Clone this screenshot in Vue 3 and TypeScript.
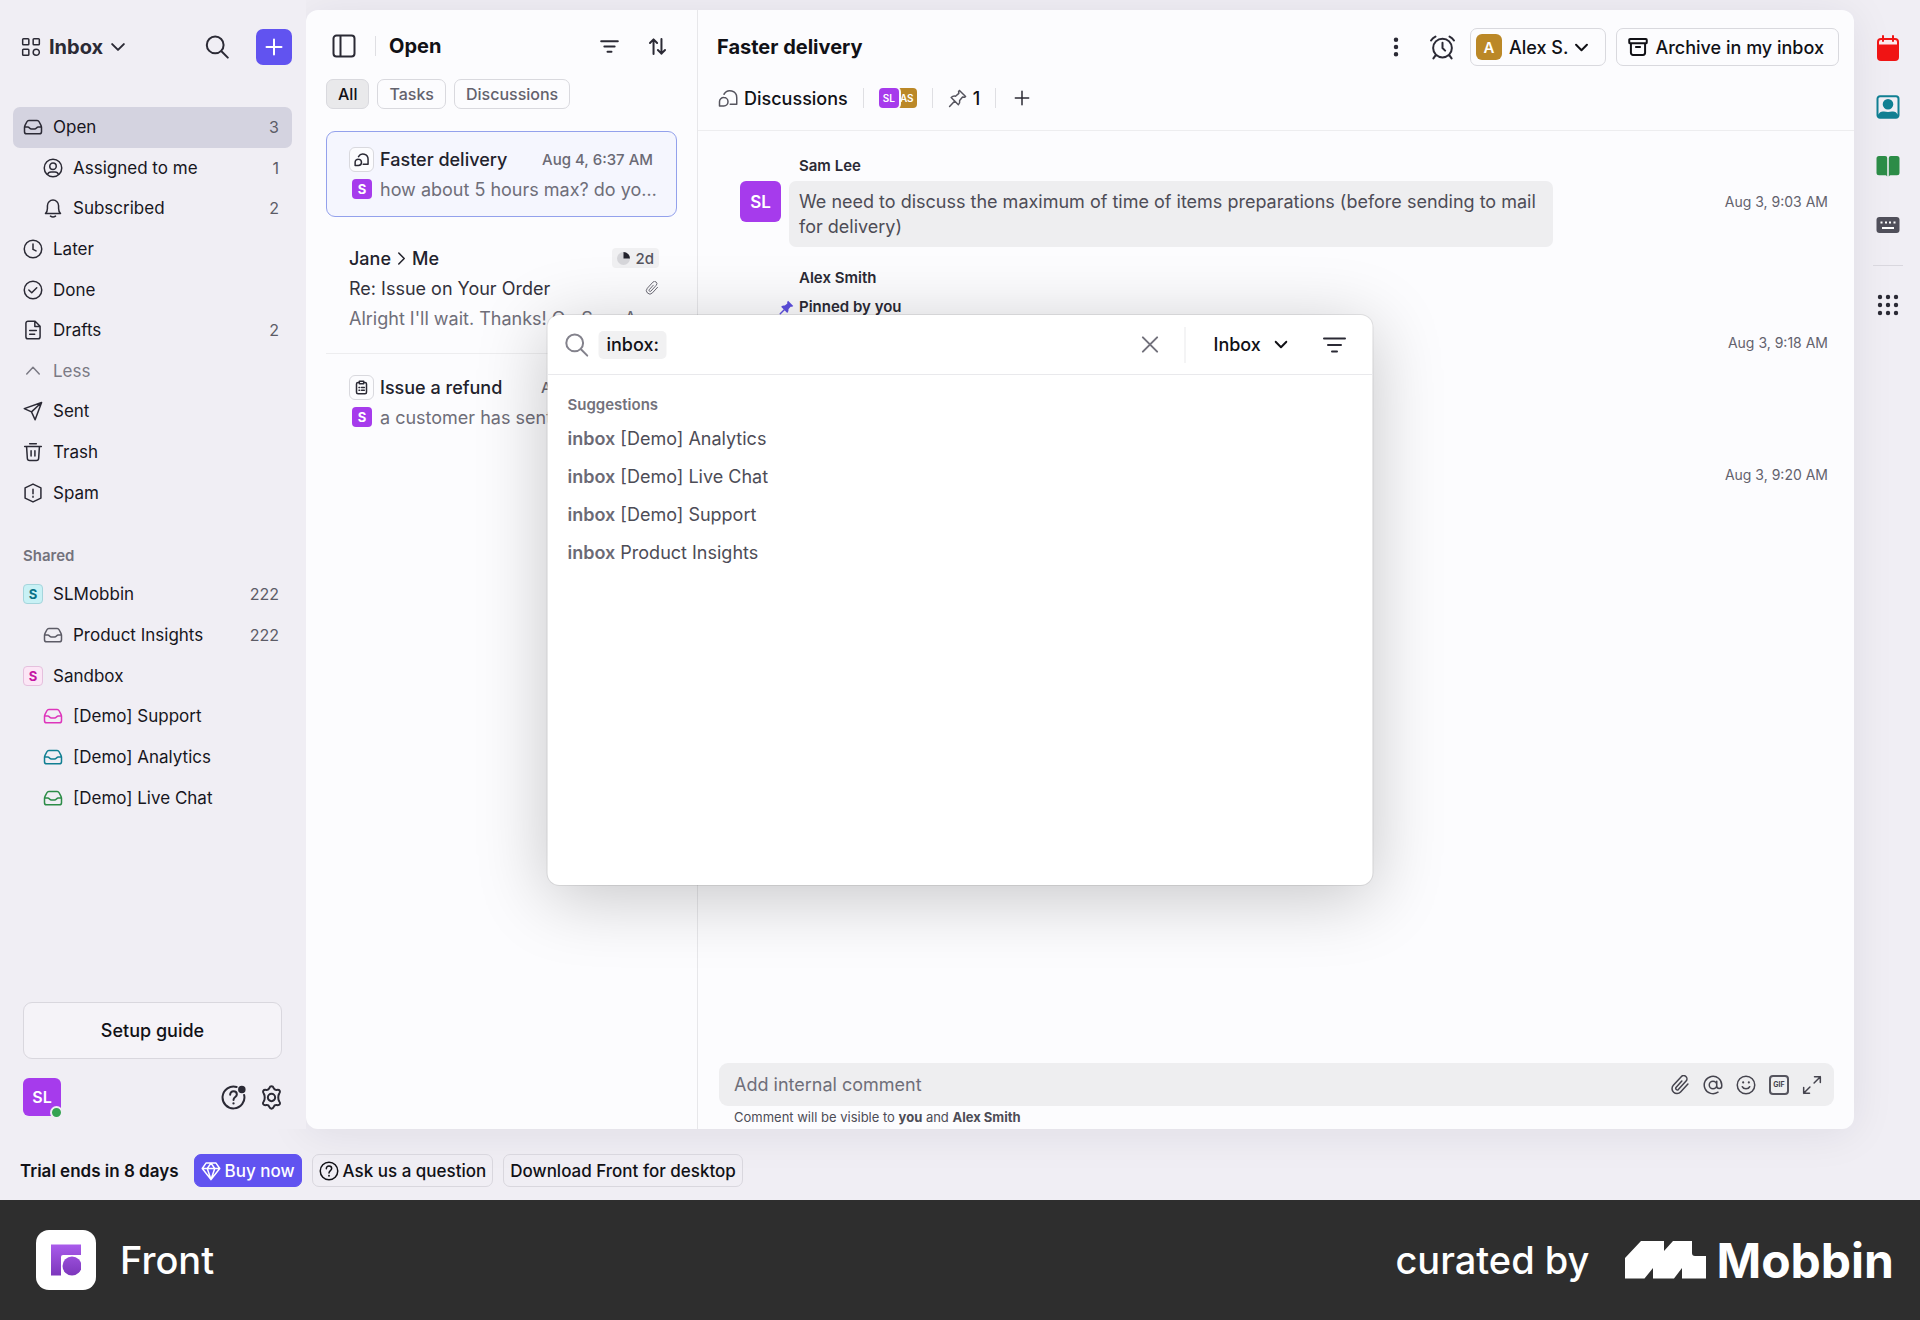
<script setup lang="ts">
import { h, ref } from 'vue'

interface Shape {
  stroke?: string[]
  fill?: string[]
}

const tray =
  'M1.8 12.6v5a2.6 2.6 0 0 0 2.6 2.6h15.2a2.6 2.6 0 0 0 2.6-2.6v-5c0-1.2-.3-2-.9-3.1l-2-3.8a2.6 2.6 0 0 0-2.3-1.4H7a2.6 2.6 0 0 0-2.3 1.4l-2 3.8c-.6 1.1-.9 1.9-.9 3.1zM2 12h3.6c1.1 0 1.6.4 2.2 1.1.7.8 1.2 1.2 2.4 1.2h3.6c1.2 0 1.7-.4 2.4-1.2.6-.7 1.1-1.1 2.2-1.1H22'

const shapes: Record<string, Shape> = {
  apps: { stroke: ['M3 2h5.4a1 1 0 0 1 1 1v5.4a1 1 0 0 1-1 1H3a1 1 0 0 1-1-1V3a1 1 0 0 1 1-1zM15.6 2H21a1 1 0 0 1 1 1v5.4a1 1 0 0 1-1 1h-5.4a1 1 0 0 1-1-1V3a1 1 0 0 1 1-1zM3 14.6h5.4a1 1 0 0 1 1 1V21a1 1 0 0 1-1 1H3a1 1 0 0 1-1-1v-5.4a1 1 0 0 1 1-1zM18.3 14.6a3.7 3.7 0 1 1 0 7.4 3.7 3.7 0 0 1 0-7.4z'] },
  down: { stroke: ['M2 7l10 10L22 7'] },
  up: { stroke: ['M4.500 15.500l7.500-8 7.500 8'] },
  right: { stroke: ['M7 2l10 10L7 22'] },
  search: { stroke: ['M10.200 1.500a8.400 8.400 0 1 1 0 16.800 8.400 8.400 0 0 1 0-16.800zM16.200 16l6.600 6.600'] },
  plus: { stroke: ['M12 2v20M2 12h20'] },
  close: { stroke: ['M3 3l18 18M21 3L3 21'] },
  tray: { stroke: [tray] },
  person: { stroke: ['M12 1.500a10.500 10.500 0 1 1 0 21 10.500 10.500 0 0 1 0-21zM12 6a3.900 3.900 0 1 1 0 7.800A3.900 3.900 0 0 1 12 6zM5.500 19.800c.6-2 2-3 4-3h5c2 0 3.400 1 4 3'] },
  bell: { stroke: ['M3 18.500h18c-1.700-1.800-2.300-3.500-2.300-6V9.200a6.700 6.700 0 0 0-13.400 0v3.300c0 2.500-.6 4.200-2.300 6zM9 21.800c1.600 1.200 4.400 1.200 6 0'] },
  clock: { stroke: ['M12 1.500a10.500 10.500 0 1 1 0 21 10.500 10.500 0 0 1 0-21zM12 6v6.500l3.600 1.800'] },
  check: { stroke: ['M12 1.500a10.500 10.500 0 1 1 0 21 10.500 10.500 0 0 1 0-21zM7 12l3.500 3.300 6-6'] },
  doc: { stroke: ['M6 1.500h8.500L20.500 7.500V20a2.500 2.500 0 0 1-2.500 2.500H6A2.500 2.500 0 0 1 3.500 20V4A2.500 2.500 0 0 1 6 1.500zM14.200 1.800v5.900h6M8 12.500h8M8 17h6'] },
  send: { stroke: ['M22.300 1.800L14.500 22.500 10.200 13 1.500 9.200zM22.300 1.800L10.200 13'] },
  trash: { stroke: ['M2 5.300h20M8 2h8M4.300 5.500l.9 14a2.800 2.800 0 0 0 2.800 2.700h8a2.800 2.800 0 0 0 2.800-2.700l.9-14M9.700 10.500v6.200M14.300 10.500v6.200'] },
  spam: { stroke: ['M12 1.300l9.500 4.600v12.200L12 22.700l-9.500-4.600V5.900zM12 7.500v5.300M12 16v1'] },
  helpDot: { stroke: ['M15 1.900A10.500 10.500 0 1 0 22.200 9.500M8.800 9.300c0-1.900 1.300-3.200 3.200-3.200s3.200 1.200 3.200 3c0 2.500-3.200 2.500-3.200 5.300'], fill: ['M12 16.600a1.100 1.100 0 1 1 0 2.200 1.100 1.100 0 0 1 0-2.200zM20 .6a3.600 3.600 0 1 1 0 7.200 3.600 3.600 0 0 1 0-7.200z'] },
  help: { stroke: ['M12 1.500a10.500 10.500 0 1 1 0 21 10.500 10.500 0 0 1 0-21zM8.800 9.300c0-1.900 1.300-3.200 3.200-3.200s3.200 1.200 3.200 3c0 2.500-3.200 2.500-3.200 5.300'], fill: ['M12 16.600a1.100 1.100 0 1 1 0 2.200 1.100 1.100 0 0 1 0-2.200z'] },
  gear: { stroke: ['M10.300 2.300a1.900 1.900 0 0 1 3.400 0c.6 1.500 1.700 2.200 3.300 2.100l1.300-.1a1.900 1.900 0 0 1 1.700 2.900l-.9 1.400c-.9 1.200-.9 2.500 0 3.700l1.300 1.800a1.900 1.900 0 0 1-1.700 2.900l-1.700.1c-1.600-.1-2.700.6-3.300 2.100a1.900 1.900 0 0 1-3.400 2.500c-.6-1.500-1.700-2.300-3.300-2.200l-1.700.2A1.900 1.900 0 0 1 3.600 16.800l1.100-1.500c.9-1.200.9-2.500 0-3.700L3.500 9.800'] },
  cog: { stroke: ['M12 1.300c1.300 0 1.700.7 2.100 1.700.5 1.400 1.400 1.900 2.900 1.700 1.100-.2 2.200-.3 2.900.8.700 1.200.200 2-.5 2.900-.9 1.100-.9 1.900-.9 3.600 0 1.700 0 2.500.9 3.600.7.9 1.200 1.700.5 2.900-.7 1.100-1.800 1-2.900.8-1.500-.2-2.400.3-2.900 1.700-.4 1-.8 1.700-2.100 1.700s-1.700-.7-2.100-1.700c-.5-1.400-1.400-1.900-2.900-1.700-1.100.2-2.200.3-2.900-.8-.7-1.200-.2-2 .5-2.900.9-1.100.9-1.900.9-3.600 0-1.700 0-2.500-.9-3.600-.7-.9-1.200-1.700-.5-2.900.7-1.100 1.800-1 2.900-.8 1.500.2 2.400-.3 2.900-1.700.4-1 .8-1.700 2.100-1.700zM12 8.500a3.500 3.500 0 1 1 0 7 3.500 3.500 0 0 1 0-7z'] },
  gem: { stroke: ['M6 2.500h12l4.500 6.500L12 22.300 1.500 9zM1.500 9h21M12 2.500L7.500 9 12 22.300 16.500 9z'] },
  sidebar: { stroke: ['M4.500 1.500h15a3 3 0 0 1 3 3v15a3 3 0 0 1-3 3h-15a3 3 0 0 1-3-3v-15a3 3 0 0 1 3-3zM8.500 1.500v21'] },
  filter: { stroke: ['M1.500 5.500h21M5.500 12h13M9.500 18.500h5'] },
  sort: { stroke: ['M7 21.500V3M2.500 7.500L7 3l4.500 4.500M17 2.500V21M12.500 16.500L17 21l4.500-4.500'] },
  chat: { stroke: ['M7.200 7.500a8.200 8.200 0 0 1 15.300 4.200V19.500h-7.800M7 11.500a5 5 0 1 1 0 10H1.800v-5a5 5 0 0 1 5.200-5z'] },
  clipboard: { stroke: ['M8 4H6.500A2.500 2.500 0 0 0 4 6.500v13A2.500 2.500 0 0 0 6.500 22h11a2.500 2.500 0 0 0 2.500-2.500v-13A2.500 2.500 0 0 0 17.500 4H16M8.500 2h7v4h-7zM8 12h1M12 12h4.500M8 16.500h1M12 16.500h4.500'] },
  clip: { stroke: ['M14.200 7.200l-7 7.800a1.900 1.900 0 0 0 2.800 2.500l9.300-10.200a3.900 3.900 0 0 0-5.800-5.300L4 12.400a5.900 5.900 0 0 0 8.700 8L21.500 10.800'] },
  at: { stroke: ['M12 7.500a4.500 4.500 0 1 1 0 9 4.500 4.500 0 0 1 0-9zM16.500 7.500v5.700a3 3 0 0 0 6 0V12a10.500 10.500 0 1 0-4.500 8.600'] },
  smile: { stroke: ['M12 1.500a10.500 10.500 0 1 1 0 21 10.500 10.500 0 0 1 0-21zM7.500 14c1.500 3.500 7.500 3.500 9 0'], fill: ['M8.600 7.600a1.300 1.300 0 1 1 0 2.600 1.300 1.300 0 0 1 0-2.600zM15.400 7.600a1.300 1.300 0 1 1 0 2.600 1.300 1.300 0 0 1 0-2.600z'] },
  expand: { stroke: ['M14.500 9.500L22 2M15 2h7v7M9.500 14.500L2 22M2 15v7h7'] },
  dots: { fill: ['M12 .5a2.700 2.700 0 1 1 0 5.400 2.700 2.700 0 0 1 0-5.400zM12 9.300a2.700 2.700 0 1 1 0 5.400 2.700 2.700 0 0 1 0-5.400zM12 18.100a2.700 2.700 0 1 1 0 5.400 2.700 2.700 0 0 1 0-5.400z'] },
  alarm: { stroke: ['M12 3.500a9 9 0 1 1 0 18 9 9 0 0 1 0-18zM12 7.500v5l2.500 2.500M1 5.300A11 11 0 0 1 5.200 1.500M23 5.300a11 11 0 0 0-4.200-3.800M5.500 19.300l-2.200 3.200M18.500 19.300l2.200 3.200'] },
  archive: { stroke: ['M2.500 2.500h19a1 1 0 0 1 1 1v3a1 1 0 0 1-1 1h-19a1 1 0 0 1-1-1v-3a1 1 0 0 1 1-1zM3.500 7.500V19A2.500 2.500 0 0 0 6 21.500h12a2.500 2.500 0 0 0 2.500-2.500V7.500M9.500 12h5'] },
  pin: { stroke: ['M14.500 1.800l7.700 7.700-1.600 1-2.200-.3-3.700 4.200c.4 2.100 0 3.900-1.600 5.400L4 10.700c1.500-1.500 3.400-2 5.500-1.600l4.200-3.600-.3-2.300zM8.300 15.500L2 22'] },
  pinned: { stroke: ['M8 16l-6 6'], fill: ['M14.500 1.200l8.300 8.300-1.800 1.400-2.400-.2-3.500 4c.4 2.200-.2 4.200-1.900 5.900L3.400 10.800c1.700-1.700 3.700-2.300 5.900-1.900l4-3.500-.2-2.400z'] },
  book: { fill: ['M3 2h6.200a2 2 0 0 1 2 2v18.500c-.6-1-1.200-1.300-2.200-1.300H3a2.500 2.500 0 0 1-2.500-2.500V4.500A2.500 2.500 0 0 1 3 2zM21 2h-6.200a2 2 0 0 0-2 2v18.500c.6-1 1.200-1.300 2.200-1.300h6a2.500 2.500 0 0 0 2.500-2.500V4.500A2.500 2.500 0 0 0 21 2z'] },
  contact: { stroke: ['M4 1.300h16a2.500 2.500 0 0 1 2.500 2.500v16.400a2.500 2.500 0 0 1-2.500 2.500H4a2.500 2.500 0 0 1-2.500-2.500V3.800A2.500 2.500 0 0 1 4 1.300z'], fill: ['M12 4a5.300 5.300 0 1 1 0 10.600A5.300 5.300 0 0 1 12 4zM2 22.500v-2.800c1.500-2.500 3.500-3.700 6-3.200 2.600.6 5.400.6 8 0 2.500-.5 4.500.7 6 3.200v2.800z'] },
  grid: { fill: [4, 12, 20].flatMap((y) => [4, 12, 20].map((x) => `M${x - 2.2} ${y}a2.200 2.200 0 1 0 4.400 0a2.200 2.200 0 1 0-4.400 0z`)) },
}

interface IconProps {
  name: string
  size: number
  weight?: number
}

const Icon = (props: IconProps) => {
  const shape = shapes[props.name]
  return h('svg', { width: props.size, height: props.size, viewBox: '0 0 24 24', 'aria-hidden': 'true', style: { display: 'block', flex: 'none' } }, [
    ...(shape.stroke ?? []).map((d) =>
      h('path', { d, fill: 'none', stroke: 'currentColor', 'stroke-width': ((props.weight ?? 1.5) * 24) / props.size, 'stroke-linecap': 'round', 'stroke-linejoin': 'round' }),
    ),
    ...(shape.fill ?? []).map((d) => h('path', { d, fill: 'currentColor' })),
  ])
}
Icon.props = ['name', 'size', 'weight']

interface NavItem {
  label: string
  icon?: string
  tone?: string
  badge?: boolean
  count?: number
  nested?: boolean
}

const folders: NavItem[] = [
  { label: 'Open', icon: 'tray', count: 3 },
  { label: 'Assigned to me', icon: 'person', count: 1, nested: true },
  { label: 'Subscribed', icon: 'bell', count: 2, nested: true },
  { label: 'Later', icon: 'clock' },
  { label: 'Done', icon: 'check' },
  { label: 'Drafts', icon: 'doc', count: 2 },
  { label: 'Less', icon: 'up', tone: 'muted' },
  { label: 'Sent', icon: 'send' },
  { label: 'Trash', icon: 'trash' },
  { label: 'Spam', icon: 'spam' },
]

const shared: NavItem[] = [
  { label: 'SLMobbin', badge: true, tone: 'teal', count: 222 },
  { label: 'Product Insights', icon: 'tray', tone: 'gray', count: 222, nested: true },
  { label: 'Sandbox', badge: true, tone: 'pink' },
  { label: '[Demo] Support', icon: 'tray', tone: 'pink', nested: true },
  { label: '[Demo] Analytics', icon: 'tray', tone: 'teal', nested: true },
  { label: '[Demo] Live Chat', icon: 'tray', tone: 'green', nested: true },
]

const current = ref('Open')
const tabs = ['All', 'Tasks', 'Discussions']
const tab = ref('All')
const comment = ref('')
const query = ref('')
const scope = ref('Inbox')
const suggestions = ['[Demo] Analytics', '[Demo] Live Chat', '[Demo] Support', 'Product Insights']
</script>

<template>
  <div class="page">
    <div class="app">
      <div class="workspace">
        <aside class="sidebar">
          <header class="side-head">
            <button class="switcher" type="button">
              <Icon name="apps" :size="20" />
              <span>Inbox</span>
              <Icon name="down" :size="14" :weight="2" />
            </button>
            <button class="bare" type="button" aria-label="Search"><Icon name="search" :size="24" :weight="2" /></button>
            <button class="compose" type="button" aria-label="Compose"><Icon name="plus" :size="18" :weight="2" /></button>
          </header>
          <nav class="nav folders" aria-label="Folders">
            <a
              v-for="item in folders"
              :key="item.label"
              href="#"
              :class="['nav-item', item.tone, { nested: item.nested, current: item.label === current }]"
              @click.prevent="current = item.label"
            >
              <Icon :name="item.icon!" :size="20" class="nav-icon" />
              <span class="nav-label">{{ item.label }}</span>
              <span class="count">{{ item.count }}</span>
            </a>
          </nav>
          <h2 class="side-title">Shared</h2>
          <nav class="nav shared" aria-label="Shared">
            <a
              v-for="item in shared"
              :key="item.label"
              href="#"
              :class="['nav-item', item.tone, { nested: item.nested, current: item.label === current }]"
              @click.prevent="current = item.label"
            >
              <span v-if="item.badge" class="team">S</span>
              <Icon v-else :name="item.icon!" :size="20" class="nav-icon" />
              <span class="nav-label">{{ item.label }}</span>
              <span class="count">{{ item.count }}</span>
            </a>
          </nav>
          <div class="side-foot">
            <button class="setup" type="button">Setup guide</button>
            <div class="account">
              <span class="avatar me">SL<i class="presence"></i></span>
              <button class="bare" type="button" aria-label="Help"><Icon name="helpDot" :size="25" :weight="2" /></button>
              <button class="bare" type="button" aria-label="Settings"><Icon name="cog" :size="25" :weight="2" /></button>
            </div>
          </div>
        </aside>

        <main class="panel">
          <section class="list">
            <header class="list-head">
              <button class="bare" type="button" aria-label="Toggle sidebar"><Icon name="sidebar" :size="24" :weight="2" /></button>
              <span class="rule"></span>
              <h1>Open</h1>
              <button class="bare" type="button" aria-label="Filter"><Icon name="filter" :size="19" :weight="2" /></button>
              <button class="bare" type="button" aria-label="Sort"><Icon name="sort" :size="19" :weight="2" /></button>
            </header>
            <div class="tabs">
              <button v-for="t in tabs" :key="t" type="button" :class="['tab', { on: t === tab }]" @click="tab = t">{{ t }}</button>
            </div>
            <article class="thread selected">
              <div class="line">
                <span class="kind"><Icon name="chat" :size="15" /></span>
                <h3>Faster delivery</h3>
                <time>Aug 4, 6:37 AM</time>
              </div>
              <div class="line">
                <span class="chip-s">S</span>
                <p class="snippet">how about 5 hours max? do yo…</p>
              </div>
            </article>
            <article class="thread wide">
              <div class="line">
                <h3 class="route">Jane <Icon name="right" :size="13" /> Me</h3>
                <span class="due">
                  <svg width="13" height="13" viewBox="0 0 13 13" aria-hidden="true">
                    <circle cx="6.5" cy="6.500" r="6.500" fill="#d6d6da" />
                    <path d="M6.500 6.500V0A6.500 6.500 0 0 1 13 6.500z" fill="#22222c" />
                  </svg>
                  2d
                </span>
              </div>
              <div class="line">
                <p class="subject">Re: Issue on Your Order</p>
                <Icon name="clip" :size="14" :weight="1" class="faint" />
              </div>
              <div class="line">
                <p class="snippet">Alright I'll wait. Thanks! On Sun, A…</p>
              </div>
            </article>
            <article class="thread">
              <div class="line">
                <span class="kind"><Icon name="clipboard" :size="15" /></span>
                <h3>Issue a refund</h3>
                <time>Aug 4, 6:30 AM</time>
              </div>
              <div class="line">
                <span class="chip-s">S</span>
                <p class="snippet">a customer has sent a req…</p>
              </div>
            </article>
          </section>

          <section class="detail">
            <header class="detail-head">
              <div class="title-row">
                <h2>Faster delivery</h2>
                <button class="bare" type="button" aria-label="More"><Icon name="dots" :size="20" /></button>
                <button class="bare" type="button" aria-label="Snooze"><Icon name="alarm" :size="25" :weight="2" /></button>
                <button class="outlined assignee" type="button"><span class="avatar gold">A</span>Alex S.<Icon name="down" :size="13" :weight="2" /></button>
                <button class="outlined archive" type="button"><Icon name="archive" :size="20" :weight="2" />Archive in my inbox</button>
              </div>
              <div class="meta-row">
                <span class="meta"><Icon name="chat" :size="20" class="dim" />Discussions</span>
                <span class="rule"></span>
                <span class="people"><span class="mini purple">SL</span><span class="mini gold behind">AS</span></span>
                <span class="rule"></span>
                <span class="meta"><Icon name="pin" :size="19" class="dim" />1</span>
                <span class="rule"></span>
                <button class="bare" type="button" aria-label="Add"><Icon name="plus" :size="16" /></button>
              </div>
            </header>
            <div class="messages">
              <div class="message">
                <p class="author">Sam Lee</p>
                <div class="body">
                  <span class="avatar big">SL</span>
                  <p class="bubble">We need to discuss the maximum of time of items preparations (before sending to mail for delivery)</p>
                  <time>Aug 3, 9:03 AM</time>
                </div>
              </div>
              <div class="message">
                <p class="author">Alex Smith</p>
                <p class="author pinned"><Icon name="pinned" :size="15" class="pin-mark" />Pinned by you</p>
                <div class="body tall"><time>Aug 3, 9:18 AM</time></div>
              </div>
              <div class="message">
                <div class="body"><time>Aug 3, 9:20 AM</time></div>
              </div>
            </div>
            <footer class="composer">
              <div class="field">
                <input v-model="comment" type="text" aria-label="Add internal comment" placeholder="Add internal comment" />
                <button class="bare" type="button" aria-label="Attach"><Icon name="clip" :size="20" /></button>
                <button class="bare" type="button" aria-label="Mention"><Icon name="at" :size="20" /></button>
                <button class="bare" type="button" aria-label="Emoji"><Icon name="smile" :size="20" /></button>
                <button class="bare gif" type="button">GIF</button>
                <button class="bare" type="button" aria-label="Expand"><Icon name="expand" :size="20" /></button>
              </div>
              <p class="note">Comment will be visible to <b>you</b> and <b>Alex Smith</b></p>
            </footer>
          </section>
        </main>

        <aside class="rail">
          <button class="bare red" type="button" aria-label="Calendar">
            <svg width="26" height="26" viewBox="0 0 26 26" aria-hidden="true">
              <rect x="2" y="3" width="22" height="23" rx="4" fill="currentColor" />
              <path d="M4 9.500V7a2 2 0 0 1 2-2h14a2 2 0 0 1 2 2v2.500z" fill="#fbe9ec" />
              <path d="M8 1v5M18 1v5" stroke="currentColor" stroke-width="2" stroke-linecap="round" />
            </svg>
          </button>
          <button class="bare teal-fg" type="button" aria-label="Contacts"><Icon name="contact" :size="24" :weight="2" /></button>
          <button class="bare green-fg" type="button" aria-label="Knowledge"><Icon name="book" :size="24" /></button>
          <button class="bare slate-fg" type="button" aria-label="Shortcuts">
            <svg width="24" height="16" viewBox="0 0 24 16" aria-hidden="true">
              <rect x="0.500" width="23" height="16" rx="3" fill="currentColor" />
              <path d="M4.500 5.500h2M9 5.500h2M13 5.500h2M17.500 5.500h2M6 11h12" stroke="#fff" stroke-width="2" />
            </svg>
          </button>
          <span class="rail-rule"></span>
          <button class="bare" type="button" aria-label="Apps"><Icon name="grid" :size="24" /></button>
        </aside>
      </div>

      <div class="trial">
        <strong>Trial ends in 8 days</strong>
        <button class="small buy" type="button"><Icon name="gem" :size="20" />Buy now</button>
        <button class="small" type="button"><Icon name="help" :size="20" />Ask us a question</button>
        <button class="small" type="button">Download Front for desktop</button>
      </div>

      <div class="search-dialog" role="dialog" aria-label="Search">
        <div class="search-bar">
          <Icon name="search" :size="24" :weight="2" class="lens" />
          <span class="token">inbox:</span>
          <input v-model="query" type="text" aria-label="Search query" />
          <button class="bare x" type="button" aria-label="Clear"><Icon name="close" :size="19" :weight="2" /></button>
          <label class="scope">
            <select v-model="scope" aria-label="Search scope"><option>Inbox</option></select>
            <Icon name="down" :size="13" :weight="2" />
          </label>
          <button class="bare" type="button" aria-label="Search filters"><Icon name="filter" :size="24" :weight="2" /></button>
        </div>
        <h4>Suggestions</h4>
        <ul>
          <li v-for="s in suggestions" :key="s"><a href="#" @click.prevent><b>inbox</b> {{ s }}</a></li>
        </ul>
      </div>
    </div>

    <footer class="credit">
      <span class="tile">
        <svg width="30" height="32" viewBox="0 0 30 32" aria-hidden="true">
          <defs>
            <linearGradient id="front-mark" gradientUnits="userSpaceOnUse" x1="0" y1="0" x2="0" y2="32">
              <stop offset="0" stop-color="#aa5cec" />
              <stop offset="1" stop-color="#7c36bb" />
            </linearGradient>
          </defs>
          <path d="M0 .5h30v10.500H12a2 2 0 0 0-2 2v18.500H0z" fill="url(#front-mark)" />
          <circle cx="21" cy="22" r="9.500" fill="url(#front-mark)" />
        </svg>
      </span>
      <span class="product">Front</span>
      <span class="by">curated by</span>
      <svg class="mobbin-mark" width="81" height="38" viewBox="0 0 81 38" aria-hidden="true">
        <path d="M16 0H39V10L48 0H67V12a3 3 0 0 0 3 3H81V37.500H57V27L49 37.500H28V27L19.500 37.500H0V17z" fill="#fff" />
      </svg>
      <span class="brand">Mobbin</span>
    </footer>
  </div>
</template>

<style>
body {
  margin: 0;
}
</style>

<style scoped>
.page {
  display: flex;
  flex-direction: column;
  min-height: 100vh;
  font-family: Inter, "Liberation Sans", sans-serif;
  font-size: 17px;
  color: #111116;
}
.page * {
  box-sizing: border-box;
}
button,
input,
select {
  font: inherit;
  color: inherit;
}
button {
  padding: 0;
  border: 0;
  background: none;
  cursor: pointer;
}
h1,
h2,
h3,
h4,
p,
ul {
  margin: 0;
  padding: 0;
}
.bare {
  display: flex;
  align-items: center;
  justify-content: center;
  color: #2b2a35;
}
.app {
  position: relative;
  flex: 1;
  display: flex;
  flex-direction: column;
  background: #f0eef4;
}
.workspace {
  flex: 1;
  display: flex;
}

/* Sidebar */
.sidebar {
  position: relative;
  z-index: 1;
  width: 306px;
  flex: none;
  display: flex;
  flex-direction: column;
  padding: 29px 14px 13px 13px;
  background: #f0eef4;
}
.side-head {
  display: flex;
  align-items: center;
  height: 36px;
  padding-left: 8px;
  margin-bottom: 42px;
}
.switcher {
  display: flex;
  align-items: center;
  gap: 8px;
  margin-right: auto;
  font-size: 20px;
  font-weight: 700;
  color: #2b2a35;
}
.compose {
  display: flex;
  align-items: center;
  justify-content: center;
  width: 36px;
  height: 36px;
  margin-left: 27px;
  border-radius: 7px;
  background: #6153f0;
  color: #fff;
}
.nav {
  display: grid;
  grid-auto-rows: 1fr;
}
.folders {
  height: 406px;
}
.shared {
  height: 244px;
}
.nav-item {
  display: flex;
  align-items: center;
  padding: 0 13px 0 10px;
  border-radius: 7px;
  color: #17161d;
  text-decoration: none;
}
.nested {
  padding-left: 30px;
}
.current {
  background: #d4d3e0;
}
.nav-icon {
  color: #2b2a35;
}
.nav-label {
  flex: 1;
  margin-left: 10px;
}
.count {
  font-size: 16px;
  color: #5c5b66;
}
.muted .nav-label,
.muted .nav-icon {
  color: #7b7a84;
}
.gray .nav-icon {
  color: #5c5b66;
}
.pink .nav-icon {
  color: #dd35bb;
}
.teal .nav-icon {
  color: #107f92;
}
.green .nav-icon {
  color: #2c8c47;
}
.team {
  width: 20px;
  height: 20px;
  border: 1px solid;
  border-radius: 4px;
  font-size: 13px;
  font-weight: 700;
  line-height: 18px;
  text-align: center;
}
.teal .team {
  border-color: #a5d5dc;
  background: #c8f1f5;
  color: #0b7285;
}
.pink .team {
  border-color: #e5c0dd;
  background: #fce6f6;
  color: #c515a3;
}
.side-title {
  margin: 33px 0 8px 10px;
  font-size: 15px;
  font-weight: 600;
  line-height: 20px;
  color: #73727c;
}
.side-foot {
  margin-top: auto;
  padding: 0 10px;
}
.setup {
  display: block;
  width: 100%;
  height: 57px;
  margin-bottom: 19px;
  border: 1px solid #d9d7de;
  border-radius: 9px;
  background: #f5f3f8;
  font-size: 18px;
  font-weight: 500;
}
.account {
  display: flex;
  align-items: center;
  gap: 13px;
  margin-right: -2px;
}
.avatar {
  position: relative;
  flex: none;
  display: flex;
  align-items: center;
  justify-content: center;
  width: 38px;
  height: 38px;
  border-radius: 6px;
  background: #a63bec;
  font-size: 16px;
  font-weight: 600;
  color: #fff;
}
.me {
  margin-right: auto;
}
.presence {
  position: absolute;
  right: -2px;
  bottom: -3px;
  width: 13px;
  height: 13px;
  border: 2px solid #f0eef4;
  border-radius: 50%;
  background: #35a352;
}

/* Conversation list */
.panel {
  flex: 1;
  min-width: 0;
  display: flex;
  margin-top: 10px;
  border-radius: 12px;
  background: #fcfcfe;
  box-shadow: 0 4px 44px rgba(20, 20, 50, 0.08);
}
.list {
  flex: none;
  width: 392px;
  padding: 24px 20px 0;
  border-right: 1px solid #e7e7ea;
}
.list-head {
  display: flex;
  align-items: center;
  height: 24px;
  padding: 0 10px 0 6px;
  gap: 29px;
}
.rule {
  width: 1px;
  height: 20px;
  background: #dfdfe3;
}
.list-head .rule {
  margin: 0 -16px 0 -10px;
}
h1,
.title-row h2 {
  margin-right: auto;
  font-size: 20px;
  font-weight: 700;
}
.tabs {
  display: flex;
  gap: 8px;
  margin: 21px 0 22px;
}
.tab {
  height: 30px;
  padding: 0 11px;
  border: 1px solid #d9d9de;
  border-radius: 7px;
  font-size: 16px;
  font-weight: 500;
  color: #63626d;
}
.tab.on {
  background: #e9e9eb;
  color: #111116;
}
.thread {
  padding: 18px 24px 12px 23px;
}
.selected {
  padding: 12px 23px 12px 22px;
  border: 1px solid #93a1ec;
  border-radius: 9px;
  background: #f5f6fe;
}
.wide {
  margin-top: 6px;
  padding: 20px 18px 20px 23px;
  border-bottom: 1px solid #ededef;
}
.line {
  display: flex;
  align-items: center;
  height: 30px;
  font-size: 18px;
}
.line h3 {
  flex: 1;
  font-size: 18px;
  font-weight: 500;
  color: #22222c;
  white-space: nowrap;
}
.line time {
  font-size: 15px;
  font-weight: 500;
  color: #6b6a75;
  white-space: nowrap;
}
.kind {
  flex: none;
  display: grid;
  place-items: center;
  width: 25px;
  height: 25px;
  margin-right: 6px;
  border: 1px solid #d9d9de;
  border-radius: 6px;
  background: #fcfcfe;
  color: #2b2a35;
}
.chip-s {
  flex: none;
  width: 20px;
  height: 20px;
  margin: 0 8px 0 3px;
  border-radius: 4px;
  background: #a63bec;
  font-size: 13px;
  font-weight: 700;
  line-height: 20px;
  text-align: center;
  color: #fff;
}
.snippet {
  flex: 1;
  white-space: nowrap;
  color: #6f6e79;
}
.line h3.route {
  display: flex;
  align-items: center;
  gap: 4px;
}
.due {
  display: flex;
  align-items: center;
  gap: 5px;
  height: 20px;
  padding: 0 5px;
  border-radius: 4px;
  background: #f0f0f2;
  font-size: 15px;
  font-weight: 500;
  color: #55545e;
}
.subject {
  flex: 1;
  color: #33323c;
}
.faint {
  color: #6b6a75;
}

/* Conversation */
.detail {
  flex: 1;
  min-width: 0;
  display: flex;
  flex-direction: column;
}
.detail-head {
  padding: 18px 15px 22px 19px;
  border-bottom: 1px solid #ededef;
}
.title-row {
  display: flex;
  align-items: center;
  height: 38px;
}
.outlined {
  display: flex;
  align-items: center;
  height: 38px;
  margin-left: 10px;
  border: 1px solid #d9d9de;
  border-radius: 7px;
  font-size: 18px;
  font-weight: 500;
  white-space: nowrap;
}
.title-row .bare {
  width: 46px;
}
.assignee {
  gap: 7px;
  margin-left: 5px;
  padding: 0 17px 0 5px;
}
.assignee .avatar {
  width: 26px;
  height: 26px;
  font-size: 15px;
}
.gold {
  background: #bb8827;
}
.archive {
  gap: 7px;
  padding: 0 14px 0 11px;
}
.meta-row {
  display: flex;
  align-items: center;
  gap: 15px;
  height: 20px;
  margin-top: 22px;
  padding-left: 1px;
}
.meta {
  display: flex;
  align-items: center;
  gap: 6px;
  font-size: 18px;
  font-weight: 500;
}
.dim {
  color: #55545e;
}
.meta-row .bare {
  margin-left: 3px;
}
.people {
  display: flex;
}
.mini {
  position: relative;
  z-index: 1;
  width: 20px;
  height: 20px;
  border-radius: 4px;
  font-size: 10px;
  font-weight: 600;
  line-height: 20px;
  text-align: center;
  color: #fff;
}
.purple {
  background: #a63bec;
  box-shadow: 0 0 0 2px #fcfcfe;
}
.behind {
  z-index: 0;
  margin-left: -2px;
}
.messages {
  flex: 1;
  padding: 25px 26px 0 42px;
}
.message {
  margin-bottom: 21px;
}
.author {
  position: relative;
  margin: 0 0 5px 59px;
  font-size: 15px;
  font-weight: 600;
  line-height: 20px;
  color: #2b2a35;
}
.pinned {
  margin-top: 9px;
}
.pin-mark {
  position: absolute;
  left: -20px;
  top: 3px;
  color: #5d4fe0;
}
.body {
  display: flex;
  align-items: flex-start;
}
.tall {
  min-height: 111px;
}
.big {
  width: 41px;
  height: 41px;
  margin-right: 8px;
  font-size: 17px;
}
.bubble {
  flex: 0 1 764px;
  padding: 8px 10px;
  border-radius: 7px;
  background: #eeeef0;
  font-size: 18px;
  line-height: 25px;
  color: #4d4c56;
}
.body time {
  margin-left: auto;
  font-size: 14px;
  line-height: 42px;
  color: #63626d;
  white-space: nowrap;
}
.composer {
  padding: 0 20px 1px 21px;
}
.field {
  display: flex;
  align-items: center;
  gap: 13px;
  height: 43px;
  padding: 0 12px 0 15px;
  border-radius: 9px;
  background: #eeeef0;
}
.field input {
  flex: 1;
  min-width: 0;
  padding: 0;
  border: 0;
  outline: 0;
  background: none;
  font-size: 18px;
}
.field input::placeholder {
  color: #6f6e79;
  opacity: 1;
}
.field .bare {
  color: #45444e;
}
.field .gif {
  width: 20px;
  height: 20px;
  border: 2px solid #55545e;
  border-radius: 4px;
  font-size: 7px;
  font-weight: 700;
}
.note {
  padding-left: 15px;
  font-size: 13px;
  line-height: 22px;
  color: #4d4c56;
}

/* Right rail */
.rail {
  width: 66px;
  flex: none;
  display: flex;
  flex-direction: column;
  align-items: center;
  padding: 34px 0 0 2px;
}
.rail .bare {
  height: 28px;
  margin-bottom: 31px;
}
.rail .red {
  color: #f01414;
}
.rail .teal-fg {
  color: #107f92;
}
.rail .green-fg {
  color: #2c8c47;
}
.rail .slate-fg {
  color: #504f5a;
}
.rail-rule {
  width: 30px;
  height: 1px;
  margin: -5px 0 25px;
  background: #d9d7de;
}

/* Trial strip */
.trial {
  display: flex;
  align-items: center;
  gap: 10px;
  height: 71px;
  padding: 12px 20px 0;
}
.trial strong {
  margin-right: 5px;
  font-weight: 600;
}
.small {
  display: flex;
  align-items: center;
  gap: 4px;
  height: 33px;
  padding: 0 6px;
  border: 1px solid #d9d7de;
  border-radius: 7px;
  font-weight: 500;
}
.buy {
  border-color: #6153f0;
  background: #6153f0;
  color: #fff;
}

/* Search dialog */
.search-dialog {
  position: absolute;
  z-index: 2;
  top: 315px;
  left: 50%;
  width: 825px;
  min-height: 570px;
  transform: translateX(-50%);
  border-radius: 12px;
  background: #fff;
  box-shadow: 0 0 0 1px rgba(0, 0, 0, 0.08), 0 12px 70px rgba(0, 0, 0, 0.22);
}
.search-bar {
  display: flex;
  align-items: center;
  height: 60px;
  padding: 0 26px 0 17px;
  border-bottom: 1px solid #e9e9ec;
}
.lens {
  color: #83828c;
}
.token {
  margin-left: 10px;
  padding: 0 8px;
  border-radius: 5px;
  background: #f1f1f2;
  font-size: 18px;
  font-weight: 500;
  line-height: 28px;
}
.search-bar input {
  flex: 1;
  min-width: 0;
  border: 0;
  outline: 0;
  background: none;
}
.x {
  margin-right: 25px;
}
.search-bar .x {
  color: #73727c;
}
.scope {
  display: flex;
  align-items: center;
  gap: 13px;
  height: 36px;
  margin-right: 35px;
  padding-left: 28px;
  border-left: 1px solid #e9e9ec;
}
.scope select {
  appearance: none;
  padding: 0;
  border: 0;
  outline: 0;
  background: none;
  font-size: 18px;
  font-weight: 500;
}
h4 {
  margin: 20px 20px 5px;
  font-size: 15px;
  font-weight: 600;
  line-height: 20px;
  color: #73727c;
}
ul {
  list-style: none;
}
li a {
  display: block;
  padding: 0 20px;
  font-size: 18px;
  line-height: 38px;
  color: #4d4c56;
  text-decoration: none;
}
li b {
  font-weight: 600;
  color: #6b6a75;
}

/* Attribution band */
.credit {
  display: flex;
  align-items: center;
  height: 120px;
  padding: 0 26px 0 36px;
  background: #2e2e2e;
  color: #fff;
}
.tile {
  display: grid;
  place-items: center;
  width: 60px;
  height: 60px;
  border-radius: 13px;
  background: #fff;
}
.product,
.by {
  font-size: 38px;
  font-weight: 500;
}
.product {
  margin: 0 auto 0 24px;
}
.mobbin-mark {
  margin: 0 10px 0 36px;
}
.brand {
  font-size: 48px;
  font-weight: 700;
}
</style>
